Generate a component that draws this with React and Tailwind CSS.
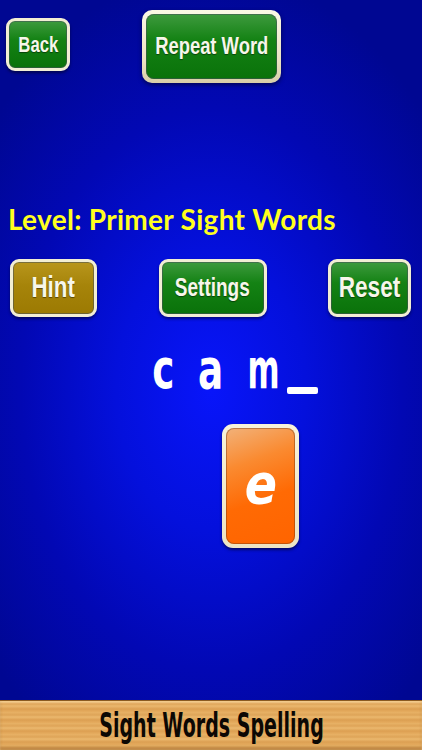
import React from "react";

const btnText = "font-['Liberation_Sans',Arial,sans-serif] font-bold text-[#f7f6ea] [text-shadow:0_1px_1px_rgba(0,0,0,0.45)] inline-block whitespace-nowrap";

const GameButton = ({ label, gold, className, textClass }) => (
  <button
    className={`flex items-center justify-center rounded-[9px] border-[3px] border-[#f2eed4] shadow-[inset_0_0_0_1px_rgba(70,80,90,0.55),0_2px_3px_rgba(0,0,0,0.45)] ${
      gold
        ? "bg-[linear-gradient(to_bottom,#b8961c,#a6840a_45%,#9c7a02)]"
        : "bg-[linear-gradient(to_bottom,#3e9a3e,#148214_40%,#0a720a)]"
    } ${className}`}
  >
    <span className={`${btnText} ${textClass}`}>{label}</span>
  </button>
);

export default function App() {
  return (
    <div className="w-full h-[750px] flex flex-col overflow-hidden bg-[radial-gradient(ellipse_75%_62%_at_50%_52%,#0815fa_0%,#0410dc_30%,#0208b4_60%,#000792_90%)]">
      {/* Top buttons */}
      <div className="flex items-start pl-[6px] h-[190px]">
        <GameButton label="Back" className="w-[64px] h-[53px] mt-[18px]" textClass="text-[22px] scale-x-[0.76]" />
        <button className="ml-[72px] mt-[10px] w-[139px] h-[73px] rounded-[10px] p-[4px] bg-[linear-gradient(to_bottom,#fbf8e6,#ebe3c2_70%,#d8cfa8)] shadow-[0_2px_4px_rgba(0,0,0,0.5)]">
          <span className="flex items-center justify-center w-full h-full rounded-[8px] bg-[linear-gradient(to_bottom,#3e9a3e,#148214_40%,#0a720a)] shadow-[inset_0_0_0_1px_rgba(70,80,90,0.55)]">
            <span className={`${btnText} text-[23px] scale-x-[0.8]`}>Repeat Word</span>
          </span>
        </button>
      </div>

      {/* Level */}
      <div className="pl-[8px] mt-[12px] h-[57px]">
        <span className="inline-block font-['Lato',sans-serif] font-bold text-[28px] leading-[34px] text-[#ffff1e] whitespace-nowrap tracking-[0.3px]">
          Level: Primer Sight Words
        </span>
      </div>

      {/* Hint / Settings / Reset */}
      <div className="flex justify-between items-start pl-[10px] pr-[11px]">
        <GameButton label="Hint" gold className="w-[87px] h-[58px]" textClass="text-[29px] scale-x-[0.77]" />
        <GameButton label="Settings" className="w-[108px] h-[58px]" textClass="text-[25px] scale-x-[0.76]" />
        <GameButton label="Reset" className="w-[83px] h-[58px]" textClass="text-[29px] scale-x-[0.78]" />
      </div>

      {/* Word */}
      <div className="flex items-end pl-[139px] mt-[26px] h-[52px] font-['DejaVu_Sans',sans-serif] font-bold text-[55px] leading-[52px] text-white">
        <span className="w-[48px] text-center"><span className="inline-block scale-x-[0.68]">c</span></span>
        <span className="w-[48px] text-center"><span className="inline-block scale-x-[0.68]">a</span></span>
        <span className="w-[38px] text-center"><span className="inline-block scale-x-[0.56]">m</span></span>
        <span className="w-[59px] flex justify-center pb-[1px]">
          <span className="block w-[31px] h-[7px] rounded-[2px] bg-white"></span>
        </span>
      </div>

      {/* Letter card */}
      <div className="pl-[222px] mt-[29px]">
        <div className="w-[77px] h-[124px] rounded-[11px] p-[4px] bg-[linear-gradient(to_bottom,#f8f3da,#ece4c4)] shadow-[0_2px_3px_rgba(0,0,0,0.5)]">
          <div className="w-full h-full rounded-[8px] flex items-center justify-center bg-[linear-gradient(160deg,#f2b27a_0%,#fa8a30_30%,#ff6a04_60%,#ff6400_100%)] shadow-[inset_0_0_0_1px_rgba(120,60,20,0.45)]">
            <span className="inline-block scale-x-[0.85] font-['DejaVu_Sans',sans-serif] font-bold italic text-[56px] leading-none text-white -mt-[4px]">e</span>
          </div>
        </div>
      </div>

      <div className="flex-1"></div>

      {/* Footer */}
      <div className="h-[50px] flex items-center justify-center border-t border-[#8a5a20] bg-[repeating-linear-gradient(to_bottom,#e8b266_0px,#dea458_3px,#ebb86e_5px,#dc9f52_8px,#e6ad60_11px)] shadow-[inset_0_2px_2px_rgba(255,230,180,0.5),inset_0_-3px_3px_rgba(120,70,20,0.35)]">
        <span className="inline-block scale-x-[0.56] font-['DejaVu_Sans',sans-serif] font-bold text-[34px] leading-none text-[#0c0804] whitespace-nowrap -mt-[2px]">
          Sight Words Spelling
        </span>
      </div>
    </div>
  );
}
